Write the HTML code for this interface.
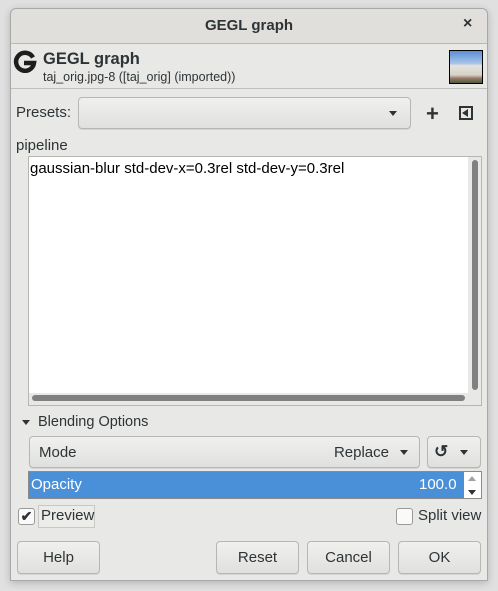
<!DOCTYPE html>
<html><head><style>
*{box-sizing:border-box;margin:0;padding:0}
body{width:498px;height:591px;background:#e0e0e0;font-family:"Liberation Sans",sans-serif;color:#2e3436;position:relative;overflow:hidden;font-size:14px}
.a{position:absolute}
.btn{position:absolute;border:1px solid #b6b6b3;border-radius:4px;background:linear-gradient(#f0f0ef,#e0e0de);box-shadow:0 1px 0 rgba(0,0,0,.08);display:flex;align-items:center;justify-content:center;font-size:15px;color:#2e3436}
</style></head><body>
<div class="a" style="left:10px;top:8px;width:478px;height:573px;background:#e8e8e7;border:1px solid #a8a8a6;border-radius:6px 6px 0 0;box-shadow:0 2px 8px rgba(0,0,0,.2)"></div>
<div class="a" style="left:11px;top:9px;width:476px;height:35px;background:#e0dfdc;border-bottom:1px solid #b8b8b5;border-radius:6px 6px 0 0"></div>
<div class="a" style="left:11px;top:17px;width:476px;text-align:center;font-weight:bold;font-size:15px">GEGL graph</div>
<div class="a" style="left:463px;top:15px;font-weight:bold;font-size:16px">×</div>
<div class="a" style="left:11px;top:88px;width:476px;height:1px;background:#c0c0bd"></div>
<svg class="a" style="left:13px;top:49px" width="24" height="24" viewBox="0 0 24 24"><path d="M20 8.5A9 9 0 1 0 21 14H11" fill="none" stroke="#1e1e1e" stroke-width="4.5"/></svg>
<div class="a" style="left:43px;top:50px;font-weight:bold;font-size:16.5px">GEGL graph</div>
<div class="a" style="left:43px;top:70px;font-size:12.5px">taj_orig.jpg-8 ([taj_orig] (imported))</div>
<div class="a" style="left:449px;top:50px;width:34px;height:34px;border:1px solid #000;background:linear-gradient(#5b8fd4 0%,#a9c5ea 40%,#e5e3dc 45%,#d6d2c8 75%,#9b7a6a 85%,#4a5a3a 100%)"></div>
<div class="a" style="left:16px;top:104px;font-size:15px">Presets:</div>
<div class="btn" style="left:78px;top:97px;width:333px;height:32px"></div>
<div class="a" style="left:389px;top:111px;border:4px solid transparent;border-top:5px solid #2e3436"></div>
<div class="a" style="left:426px;top:101px;font-weight:bold;font-size:22px">+</div>
<div class="a" style="left:459px;top:106px;width:14px;height:14px;border:2px solid #2e3436"></div>
<div class="a" style="left:462px;top:109px;border:4px solid transparent;border-right:6px solid #2e3436;border-left:0"></div>
<div class="a" style="left:16px;top:137px;font-size:15px">pipeline</div>
<div class="a" style="left:28px;top:156px;width:454px;height:250px;background:#fff;border:1px solid #b6b6b3"></div>
<div class="a" style="left:29px;top:393px;width:452px;height:12px;background:#e8e8e7"></div>
<div class="a" style="left:468px;top:157px;width:13px;height:236px;background:#e8e8e7"></div>
<div class="a" style="left:472px;top:160px;width:6px;height:230px;background:#7e8180;border-radius:3px"></div>
<div class="a" style="left:32px;top:395px;width:433px;height:6px;background:#7e8180;border-radius:3px"></div>
<div class="a" style="left:30px;top:160px;font-size:15px;color:#000">gaussian-blur std-dev-x=0.3rel std-dev-y=0.3rel</div>
<div class="a" style="left:22px;top:420px;border:4px solid transparent;border-top:5px solid #2e3436"></div>
<div class="a" style="left:38px;top:414px;font-size:14.5px">Blending Options</div>
<div class="btn" style="left:29px;top:436px;width:391px;height:32px;justify-content:flex-start;padding-left:9px">Mode<span style="margin-left:auto;margin-right:30px">Replace</span></div>
<div class="a" style="left:400px;top:450px;border:4px solid transparent;border-top:5px solid #2e3436"></div>
<div class="btn" style="left:427px;top:436px;width:54px;height:32px;justify-content:flex-start;padding-left:6px;font-size:17px;font-weight:bold">↺</div>
<div class="a" style="left:460px;top:450px;border:4px solid transparent;border-top:5px solid #2e3436"></div>
<div class="a" style="left:28px;top:471px;width:454px;height:28px;background:#4a90d9;border:1px solid #8a8a88"></div>
<div class="a" style="left:464px;top:472px;width:17px;height:26px;background:#fff"></div>
<div class="a" style="left:468px;top:476px;border:4px solid transparent;border-bottom:5px solid #a0a0a0;border-top:0"></div>
<div class="a" style="left:468px;top:490px;border:4px solid transparent;border-top:5px solid #2e3436;border-bottom:0"></div>
<div class="a" style="left:31px;top:476px;color:#fff;font-size:15px">Opacity</div>
<div class="a" style="left:419px;top:476px;color:#fff;font-size:15px">100.0</div>
<div class="a" style="left:18px;top:508px;width:17px;height:17px;border:1px solid #9a9a98;border-radius:3px;background:#fafafa;font-size:14px;line-height:15px;text-align:center;font-weight:bold">✔</div>
<div class="a" style="left:38px;top:505px;width:57px;height:23px;border:1px solid #c8c8c5;background:#ececea"></div>
<div class="a" style="left:41px;top:507px;font-size:15px">Preview</div>
<div class="a" style="left:396px;top:508px;width:17px;height:17px;border:1px solid #9a9a98;border-radius:3px;background:#fafafa"></div>
<div class="a" style="left:418px;top:507px;font-size:15px">Split view</div>
<div class="btn" style="left:17px;top:541px;width:83px;height:33px">Help</div>
<div class="btn" style="left:216px;top:541px;width:83px;height:33px">Reset</div>
<div class="btn" style="left:307px;top:541px;width:83px;height:33px">Cancel</div>
<div class="btn" style="left:398px;top:541px;width:83px;height:33px">OK</div>
</body></html>
